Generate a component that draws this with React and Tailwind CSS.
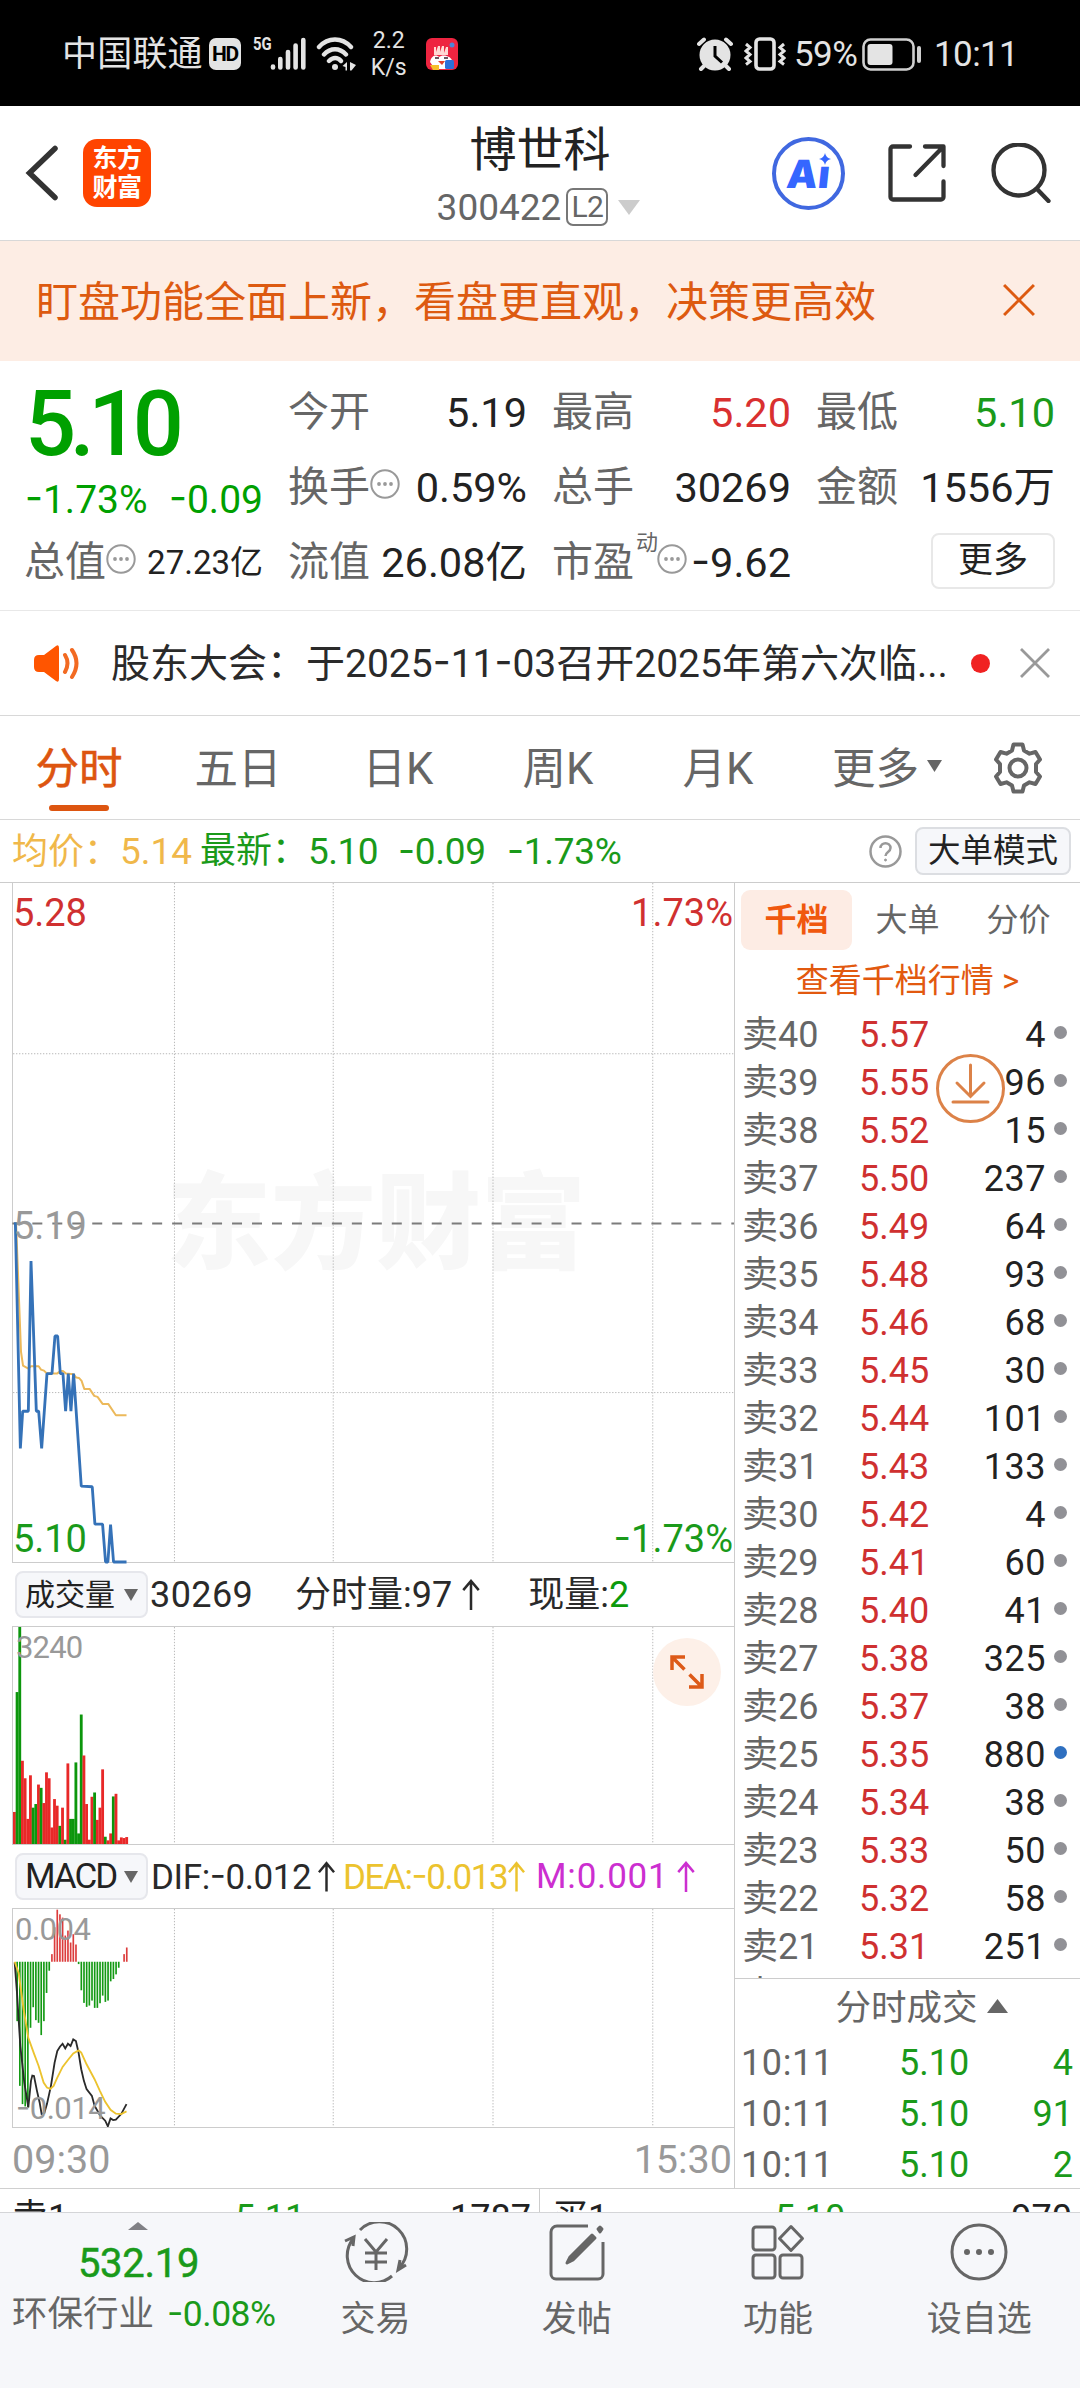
import { Fragment } from 'react';

const quoteColumns = [
    [
        { label: '今开', value: '5.19' },
        { label: '换手', value: '0.59%', info: true },
        { label: '流值', value: '26.08亿' },
    ],
    [
        { label: '最高', value: '5.20', color: 'text-[#d93030]' },
        { label: '总手', value: '30269' },
        { label: '市盈', sup: '动', value: '-9.62', info: true },
    ],
];

const asks = [
    [40, '5.57', 4], [39, '5.55', 96], [38, '5.52', 15], [37, '5.50', 237], [36, '5.49', 64],
    [35, '5.48', 93], [34, '5.46', 68], [33, '5.45', 30], [32, '5.44', 101], [31, '5.43', 133],
    [30, '5.42', 4], [29, '5.41', 60], [28, '5.40', 41], [27, '5.38', 325], [26, '5.37', 38],
    [25, '5.35', 880], [24, '5.34', 38], [23, '5.33', 50], [22, '5.32', 58], [21, '5.31', 251],
];

const trades = [4, 91, 2];

// positive = up minute (red), negative = down minute (green)
const volume = [
    97, -460, -657, 252, 199, 76, 208, -110, -121, 180, -170, 124, 217, 199, 50, 136, 116, -55, 110, -13, 244, -76,
    -76, -247, -32, -392, 268, 121, 13, 143, -156, 73, 110, 226, -22, 11, 32, -144, 152, 11, 20, 18, 21,
];

const macd = [
    0, -179, -374, -429, -436, -439, -199, -137, -176, -184, -221, -179, -94, -27, 23, 104, 157, 143, 133, 79, 94, 58,
    83, 52, -7, -86, -124, -136, -132, -117, -139, -139, -125, -102, -121, -117, -59, -52, -38, -18, 0, 23, 43,
];

// Roboto's hyphen is too short for figures, Inter's has the right length
const Num = ({ children }) =>
    children.split('-').map((part, i) => (
        <Fragment key={i}>
            {i > 0 && <span className="relative -top-[0.04em] font-[Inter]">-</span>}
            {part}
        </Fragment>
    ));

const InfoDots = () => (
    <svg className="mb-2 h-[30px] w-[30px] shrink-0" viewBox="0 0 30 30">
        <circle cx="15" cy="15" r="13.7" fill="none" stroke="#999" strokeWidth="2" />
        <circle cx="9" cy="15" r="1.9" fill="#999" />
        <circle cx="15" cy="15" r="1.9" fill="#999" />
        <circle cx="21" cy="15" r="1.9" fill="#999" />
    </svg>
);

const Cross = ({ className }) => (
    <svg className={className} viewBox="0 0 30 30" stroke="currentColor" strokeWidth="2.8">
        <path d="m1 1 28 28M29 1 1 29" />
    </svg>
);

const UpArrow = ({ className }) => (
    <svg className={className} viewBox="0 0 18 32" fill="none" stroke="currentColor" strokeWidth="2.6">
        <path d="M9 32V2M1 11.5 9 2l8 9.5" />
    </svg>
);

const GridLines = ({ height }) => (
    <g stroke="#b8b8b8" strokeWidth="3" strokeDasharray="4 5">
        {[485, 962, 1442, 1922].map((x) => (
            <line key={x} x1={x} x2={x} y1="0" y2={height} />
        ))}
    </g>
);

const StatusBar = () => (
    <div className="flex h-[106px] items-center bg-black pl-[62px] pr-[62px] pt-[2px] text-[#e4e4e4]">
        <span className="text-[35px] tracking-[0.2px]">中国联通</span>
        <span className="ml-[6px] flex h-[32px] w-[32px] items-center justify-center rounded-[7px] bg-[#e4e4e4] text-[21px] font-bold tracking-[-1.5px] text-black">HD</span>
        <span className="mb-[21px] ml-[12px] w-[17px] origin-left scale-x-[0.78] text-[19px] font-bold">5G</span>
        <svg className="h-[34px] w-[36px]" viewBox="0 0 36 34" stroke="#e4e4e4" strokeWidth="4.6" strokeLinecap="round">
            <path d="M3 30.5v-1M10.3 30.5v-8.5M18 30.5v-15.5M25.6 30.5v-22M33.3 30.5V3" />
        </svg>
        <svg className="ml-[10px] h-[36px] w-[42px]" viewBox="0 0 42 36" fill="none" stroke="#e4e4e4" strokeWidth="4.4" strokeLinecap="round">
            <path d="M3 11c9-10 23-10 32 0M8 18.5c6.5-7 15.5-7 22 0M13 25c4-4 8.5-4 12 0" />
            <circle cx="19" cy="31" r="3" fill="#e4e4e4" stroke="none" />
            <path d="M26.5 30 31 26v8.5h-1.500V31zM34 26l6 3-4.500 5.500H34z" fill="#e4e4e4" stroke="none" />
        </svg>
        <span className="ml-[13px] flex flex-col items-center text-[23px] leading-[27px]">
            <span>2.2</span>
            <span>K/s</span>
        </span>
        <svg className="ml-[19px] h-[32px] w-[32px]" viewBox="0 0 32 32">
            <rect width="32" height="32" rx="6" fill="#ee2440" />
            <path d="M8 17V9h2v5l2-6h2v6l2-6h2v7l2-6h2v8z" fill="#ffd9d4" />
            <path d="M4 24c2-8 7-7 9-5 3-3 12-2 14 5l-5 7H9z" fill="#fff" />
            <path d="M9 20h4M18 20h4" stroke="#3a2430" strokeWidth="1.6" />
            <path d="M12 23h7l-3 4z" fill="#e0412e" />
            <rect x="19" y="22" width="9" height="9" rx="1.5" fill="#2e70d8" />
            <path d="M4 27h9v5H7z" fill="#f6bf2a" />
            <circle cx="26" cy="7" r="2.5" fill="#4c86d8" />
        </svg>
        <div className="ml-auto flex items-center">
            <svg className="h-[34px] w-[36px]" viewBox="0 0 36 34">
                <circle cx="18" cy="18" r="15.5" fill="#e4e4e4" />
                <path d="M2 7 7 2.5M34 7l-5-4.5M7 29l-3 3M29 29l3 3" stroke="#e4e4e4" strokeWidth="4" strokeLinecap="round" />
                <path d="M18 9v10l7 6.5" fill="none" stroke="#000" strokeWidth="3" />
            </svg>
            <svg className="ml-[11px] h-[34px] w-[42px]" viewBox="0 0 42 34" fill="none" stroke="#e4e4e4">
                <rect x="12" y="2" width="18" height="30" rx="3.5" strokeWidth="3.6" />
                <path d="m2 7 4 3.500-4 3.500 4 3.500-4 3.500 4 3.500-4 3M40 7l-4 3.500 4 3.500-4 3.500 4 3.500-4 3.500 4 3" strokeWidth="3" />
            </svg>
            <span className="ml-[8px] w-[64px] text-[35px] tracking-[-0.6px]">59%</span>
            <svg className="ml-[4px] h-[33px] w-[60px]" viewBox="0 0 60 33">
                <rect x="1.5" y="1.5" width="50" height="30" rx="7" fill="none" stroke="#cfcfcf" strokeWidth="2.6" />
                <rect x="5.5" y="6" width="25" height="21" rx="3" fill="#e4e4e4" />
                <rect x="55" y="8" width="4" height="17" rx="2" fill="#cfcfcf" />
            </svg>
            <span className="ml-[12px] w-[84px] text-[35px] tracking-[-0.6px]">10:11</span>
        </div>
    </div>
);

const Header = () => (
    <header className="grid h-[135px] grid-cols-[1fr_auto_1fr] items-center border-b border-[#d8d8d8]">
        <div className="flex items-center pl-[25px]">
            <svg className="h-[56px] w-[34px]" viewBox="0 0 34 56" fill="none" stroke="#333" strokeWidth="5.5" strokeLinecap="round">
                <path d="M30 3.500 4.500 28 30 52.500" />
            </svg>
            <div className="ml-[24px] flex h-[68px] w-[68px] flex-col items-center justify-center rounded-[14px] bg-[#ff4400] text-[25px] font-bold leading-[29px] tracking-[-0.5px] text-white">
                <span>东方</span>
                <span>财富</span>
            </div>
        </div>
        <div className="flex flex-col items-center pt-[6px]">
            <h1 className="h-[47px] text-[47px] text-[#222]">博世科</h1>
            <div className="-ml-[3px] mt-[15px] flex h-[38px] items-center text-[37px] text-[#666]">
                <span>300422</span>
                <span className="ml-[5px] flex h-[38px] w-[42px] items-center justify-center rounded-[7px] border-2 border-[#777] text-[30px] tracking-[-0.5px]">L2</span>
                <svg className="ml-[10px] h-[15px] w-[22px]" viewBox="0 0 22 15"><path d="M0 0h22L11 15z" fill="#ccc" /></svg>
            </div>
        </div>
        <div className="flex items-center justify-end pr-[29px]">
            <div className="relative flex h-[73px] w-[73px] items-center justify-center rounded-full border-[4px] border-[#4068e0]">
                <span className="-skew-x-6 font-[Inter] text-[39px] font-black tracking-[0.5px] text-[#3566ff]">Aı</span>
                <svg className="absolute right-[10px] top-[12px] h-[12px] w-[12px]" viewBox="0 0 12 12"><path d="M6 0q1 5 6 6-5 1-6 6-1-5-6-6 5-1 6-6z" fill="#3566ff" /></svg>
            </div>
            <svg className="ml-[43px] h-[58px] w-[58px]" viewBox="0 0 58 58" fill="none" stroke="#333" strokeWidth="4.3" strokeLinecap="round" strokeLinejoin="round">
                <path d="M22 2.500H5A2.500 2.500 0 0 0 2.500 5v48A2.500 2.500 0 0 0 5 55.500h48a2.500 2.500 0 0 0 2.500-2.500V37.500M37 2.500h18.500V22M54 4 27.500 31" />
            </svg>
            <svg className="ml-[45px] h-[60px] w-[60px]" viewBox="0 0 60 60" fill="none" stroke="#333" strokeWidth="4.3" strokeLinecap="round">
                <circle cx="28" cy="27" r="25.5" />
                <path d="m46 46 11.500 12" />
            </svg>
        </div>
    </header>
);

const QuoteRow = ({ label, sup, value, info, color = 'text-[#222]' }) => (
    <div className="flex h-[75px] items-center justify-between">
        <div className="-ml-[1px] flex items-center text-[#666]">
            <span className="text-[41px]">{label}</span>
            {sup && <span className="-mr-[1px] ml-[2px] mb-[40px] text-[22px]">{sup}</span>}
            {info && <InfoDots />}
        </div>
        <span className={`text-[41.500px] ${color}`}><Num>{value}</Num></span>
    </div>
);

const QuotePanel = () => (
    <section className="grid h-[250px] grid-cols-4 gap-x-[26px] border-b border-[#e8e8e8] px-[25px] pt-[14px] text-[#222]">
        <div className="flex flex-col">
            <div className="flex h-[100px] items-center text-[90px] font-medium tracking-[-6.5px] text-[#00a000]">5.10</div>
            <div className="flex h-[48px] items-center justify-between text-[39px] text-[#00a000]">
                <span><Num>-1.73%</Num></span>
                <span><Num>-0.09</Num></span>
            </div>
            <div className="flex h-[79px] items-center">
                <span className="-ml-[1px] text-[41px] text-[#666]">总值</span>
                <InfoDots />
                <span className="ml-auto text-[33px]">27.23亿</span>
            </div>
        </div>
        {quoteColumns.map((rows, i) => (
            <div key={i}>
                {rows.map((row) => (
                    <QuoteRow key={row.label} {...row} />
                ))}
            </div>
        ))}
        <div>
            <QuoteRow label="最低" value="5.10" color="text-[#1a9a1a]" />
            <QuoteRow label="金额" value="1556万" />
            <div className="flex h-[71px] items-center justify-end">
                <button className="h-[56px] w-[124px] rounded-[8px] border-2 border-[#e8e8e8] text-[35px]">更多</button>
            </div>
        </div>
    </section>
);

const Notice = () => (
    <section className="flex h-[105px] items-center border-b border-[#d8d8d8] pl-[34px] pr-[30px]">
        <svg className="h-[37px] w-[46px]" viewBox="0 0 46 37">
            <path d="M0 15q0-5 5-5h5L22 1q3-2 3 2v31q0 4-3 2L10 27H5q-5 0-5-5z" fill="#ff5500" />
            <path d="M31 10q5 8 0 17M38 5q9 13 0 27" fill="none" stroke="#f26a22" strokeWidth="4" strokeLinecap="round" />
        </svg>
        <span className="ml-[31px] whitespace-nowrap text-[39px] text-[#2a2a2a]"><Num>股东大会：于2025-11-03召开2025年第六次临...</Num></span>
        <span className="ml-auto h-[19px] w-[19px] rounded-full bg-[#f02222]" />
        <Cross className="ml-[30px] h-[30px] w-[30px] text-[#999]" />
    </section>
);

const PeriodTabs = () => (
    <nav className="flex h-[104px] items-center border-b border-[#d8d8d8] text-[43.500px] text-[#666]">
        <div className="relative flex h-full w-[158px] items-center justify-center pt-[5px] text-[#dd5510] [-webkit-text-stroke:0.6px]">
            分时
            <span className="absolute bottom-[8px] left-[49px] h-[6px] w-[60px] rounded-full bg-[#dd5510]" />
        </div>
        {['五日', '日K', '周K', '月K'].map((tab) => (
            <div key={tab} className="w-[160px] pt-[5px] text-center">{tab}</div>
        ))}
        <div className="flex w-[178px] items-center justify-center pt-[5px]">
            更多
            <svg className="mb-[8px] ml-[8px] h-[12px] w-[15px]" viewBox="0 0 15 12"><path d="M0 0h15L7.500 12z" fill="#666" /></svg>
        </div>
        <svg className="ml-[16px] h-[52px] w-[52px]" viewBox="0 0 52 52" fill="none" stroke="#666" strokeWidth="4">
            <path d="M21.500 2.500h9l1.500 6 5.500 3.200 6-1.700L48 17.500 44 22v8l4 4.500-4.500 7.500-6-1.700L32 43.500l-1.500 6h-9l-1.500-6-5.500-3.200-6 1.700L4 34.500 8 30v-8l-4-4.500L8.500 10l6 1.700L20 8.500z" strokeLinejoin="round" />
            <circle cx="26" cy="26" r="8.5" />
        </svg>
    </nav>
);

const PriceBar = () => (
    <div className="flex h-[63px] items-center border-b border-[#ccc] pl-[12px] pr-[9px] text-[37px] text-[#1a9a1a]">
        <span className="w-[188px] whitespace-nowrap text-[#f0b84a]">
            <span className="inline-block w-[108px] text-[36px]">均价：</span>5.14
        </span>
        <span className="inline-block w-[108px] text-[36px]">最新：</span>
        <span className="w-[90px] tracking-[-0.5px]">5.10</span>
        <span className="w-[109px] tracking-[-0.3px]"><Num>-0.09</Num></span>
        <span className="tracking-[-0.3px]"><Num>-1.73%</Num></span>
        <svg className="ml-auto h-[33px] w-[33px]" viewBox="0 0 33 33" fill="none" stroke="#999" strokeWidth="2.5">
            <circle cx="16.500" cy="16.500" r="15" />
            <path d="M11.500 13c0-6.500 10-6.500 10 0 0 4-5 4-5 8" />
            <circle cx="16.500" cy="25" r="1" fill="#999" strokeWidth="1" />
        </svg>
        <button className="ml-[13px] h-[48px] w-[156px] rounded-[8px] border-2 border-[#dcdee2] bg-[#f6f7fa] text-[32.500px] text-[#222]">大单模式</button>
    </div>
);

const PriceChart = () => (
    <div className="relative h-[680px] border-b border-l border-[#ccc]">
        <div className="absolute left-[153px] top-[289px] whitespace-nowrap text-[105px] font-black text-[#f7f7f7]">东方财富</div>
        <svg className="absolute inset-0 h-full w-full overflow-visible" viewBox="0 0 2166 2040" fill="none">
            <GridLines height={2040} />
            <path d="M0 513H2166M0 1531H2166" stroke="#b8b8b8" strokeWidth="3" strokeDasharray="4 5" />
            <path d="M-2 1023H2166" stroke="#7c7c7c" strokeWidth="6" strokeDasharray="30 30" />
            <g transform="translate(-38 894)" strokeLinejoin="round">
                <polyline
                    points="47,125 62,515 68,556 84,565 92,558 115,558 122,568 131,571 140,580 170,580 180,572 188,572 197,580 220,582 228,592 236,593 244,602 252,626 268,626 282,647 292,650 307,671 324,671 347,705 379,705"
                    stroke="#ecb95a"
                    strokeWidth="6"
                />
                <polyline
                    points="45,125 60,805 67,693 84,693 92,242 108,693 115,693 124,805 140,580 155,580 164,467 172,467 180,580 188,580 196,693 204,580 212,693 220,580 243,918 276,920 284,1032 307,1032 316,1146 323,1146 331,1034 340,1146 379,1146"
                    stroke="#3572b8"
                    strokeWidth="8.5"
                    strokeLinejoin="bevel"
                />
            </g>
        </svg>
        <div className="absolute left-0 top-[11px] text-[38px] tracking-[-0.1px] text-[#d03030]">5.28</div>
        <div className="absolute right-[1px] top-[11px] text-[38px] text-[#d03030]">1.73%</div>
        <div className="absolute left-0 top-[324px] text-[38px] tracking-[-0.1px] text-[#999]">5.19</div>
        <div className="absolute bottom-[4px] left-0 text-[38px] tracking-[-0.1px] text-[#1a9a1a]">5.10</div>
        <div className="absolute bottom-[4px] right-[1px] text-[38px] text-[#1a9a1a]"><Num>-1.73%</Num></div>
    </div>
);

const IndicatorButton = ({ children }) => (
    <button className="ml-[3px] flex h-[47px] w-[133px] shrink-0 items-center justify-between rounded-[8px] border-2 border-[#e6e7ec] bg-[#f6f7fa] pl-[8px] pr-[8px] text-[#222]">
        {children}
        <svg className="h-[12px] w-[14px]" viewBox="0 0 14 12"><path d="M0 0h14L7 12z" fill="#666" /></svg>
    </button>
);

const VolumeChart = () => (
    <div className="relative h-[219px] border-b border-l border-t border-[#ccc]">
        <svg className="absolute inset-0 h-full w-full" viewBox="0 0 2166 657" preserveAspectRatio="none">
            <GridLines height={657} />
            {volume.map((v, i) => (
                <rect key={i} x={i * 8.03} y={657 - Math.abs(v)} width="8.5" height={Math.abs(v)} fill={v > 0 ? '#e82828' : '#0c960c'} />
            ))}
        </svg>
        <div className="absolute left-[3px] top-[5px] text-[31px] tracking-[-0.8px] text-[#999]">3240</div>
        <div className="absolute right-[13px] top-[11px] flex h-[68px] w-[68px] items-center justify-center rounded-full bg-[#fdf0e8]">
            <svg className="h-[34px] w-[34px]" viewBox="0 0 34 34" fill="none" stroke="#dd5a18" strokeWidth="3.5">
                <path d="M15 2H2v13M2 2l12.500 12.500M19 32h13V19M32 32 19.500 19.500" />
            </svg>
        </div>
    </div>
);

const MacdChart = () => (
    <div className="relative h-[220px] border-b border-l border-t border-[#ccc]">
        <svg className="absolute inset-0 h-full w-full" viewBox="38 877 2166 657" preserveAspectRatio="none" fill="none">
            <g transform="translate(38 877)"><GridLines height={657} /></g>
            {macd.map((v, i) => (
                <rect key={i} x={40 + i * 8.03} y={v > 0 ? 1036 - v : 1036} width="5" height={Math.abs(v)} fill={v > 0 ? '#dc3c3c' : '#149a14'} />
            ))}
            <polyline
                points="43,1038 50,1130 60,1290 72,1400 84,1475 92,1395 96,1379 101,1380 110,1425 118,1460 124,1495 132,1492 140,1465 152,1410 163,1340 171,1305 179,1292 187,1283 195,1297 203,1283 211,1290 219,1270 227,1275 235,1310 243,1360 251,1395 259,1420 275,1440 283,1470 300,1500 315,1515 323,1532 331,1508 339,1513 347,1512 363,1495 379,1465"
                stroke="#2a2a2a"
                strokeWidth="5.5"
            />
            <polyline
                points="43,1036 55,1070 70,1180 84,1265 100,1310 115,1350 130,1400 140,1415 150,1419 160,1410 171,1385 187,1353 203,1332 219,1312 235,1303 243,1310 259,1345 283,1390 299,1425 315,1458 331,1482 347,1494 363,1495 379,1487"
                stroke="#ecc32e"
                strokeWidth="5.5"
            />
        </svg>
        <div className="absolute left-[2px] top-[5px] text-[31px] tracking-[-0.5px] text-[#999]">0.004</div>
        <div className="absolute bottom-[3px] left-[3px] text-[31px] tracking-[-0.5px] text-[#999]"><Num>-0.014</Num></div>
    </div>
);

const ChartColumn = () => (
    <div className="w-[735px] border-r border-[#ccc] pl-[12px]">
        <PriceChart />
        <div className="flex h-[63px] items-center text-[36px] text-[#2a2a2a]">
            <IndicatorButton><span className="text-[30px]">成交量</span></IndicatorButton>
            <span className="ml-[2px] w-[145px] tracking-[0.4px]">30269</span>
            <span>分时量:97</span>
            <UpArrow className="ml-[10px] h-[31px] w-[18px]" />
            <span className="ml-[48px]">现量:<span className="text-[#0c9a0c]">2</span></span>
        </div>
        <VolumeChart />
        <div className="flex h-[63px] items-center text-[35px] text-[#2a2a2a]">
            <IndicatorButton><span className="text-[35px] tracking-[-2px]">MACD</span></IndicatorButton>
            <span className="ml-[3px] w-[167px] tracking-[-0.4px]"><Num>DIF:-0.012</Num></span>
            <UpArrow className="h-[31px] w-[17px]" />
            <span className="ml-[8px] w-[165px] whitespace-nowrap tracking-[-1.4px] text-[#ecc32e]"><Num>DEA:-0.013</Num></span>
            <UpArrow className="h-[31px] w-[17px] text-[#ecc32e]" />
            <span className="ml-[11px] w-[141px] tracking-[0.8px] text-[#cc2fd0]">M:0.001</span>
            <UpArrow className="h-[31px] w-[18px] text-[#cc2fd0]" />
        </div>
        <MacdChart />
        <div className="flex h-[61px] items-center justify-between pt-[3px] pr-[2px] text-[39.500px] text-[#999]">
            <span>09:30</span>
            <span>15:30</span>
        </div>
    </div>
);

const OrderBook = () => (
    <div className="relative flex-1">
        <div className="flex h-[73px] items-center pl-[6px] text-[32px] text-[#666]">
            <span className="flex h-[60px] w-[111px] items-center justify-center rounded-[9px] bg-[#fdece4] font-bold text-[#f0580e]">千档</span>
            <span className="w-[111px] text-center">大单</span>
            <span className="w-[111px] text-center">分价</span>
        </div>
        <div className="flex h-[48px] items-center justify-center pt-[1px] text-[33px] text-[#e2590f]">查看千档行情&nbsp;&gt;</div>
        <div className="h-[975px] overflow-hidden border-b border-[#ccc] pt-[7px] text-[36px]">
            {asks.map(([level, price, qty]) => (
                <div key={level} className="flex h-[48px] items-center pl-[7px] pr-[13px]">
                    <span className="w-[117px] text-[#666]">卖{level}</span>
                    <span className="w-[80px] text-[#cf3030]">{price}</span>
                    <span className="ml-auto tracking-[0.5px] text-[#222]">{qty}</span>
                    <span className={`mb-[6px] ml-[8px] h-[13px] w-[13px] rounded-full ${level === 25 ? 'bg-[#2f70c0]' : 'bg-[#919196]'}`} />
                </div>
            ))}
            <div className="flex h-[48px] items-center pl-[7px] text-[#666]">卖20</div>
        </div>
        <svg className="absolute left-[201px] top-[171px] h-[69px] w-[69px]" viewBox="0 0 69 69" fill="none" stroke="#dc8248" strokeWidth="3">
            <circle cx="34.5" cy="34.5" r="33" />
            <path d="M34.500 11v31M21 29l13.500 13.500L48 29M17 48h35" strokeLinecap="round" />
        </svg>
        <div className="flex h-[58px] items-center justify-center pl-[28px] pt-[2px] text-[35.500px] text-[#666]">
            分时成交
            <svg className="mb-[7px] ml-[9px] h-[14px] w-[21px]" viewBox="0 0 21 14"><path d="M0 14h21L10.500 0z" fill="#666" /></svg>
        </div>
        {trades.map((qty) => (
            <div key={qty} className="flex h-[51px] items-center justify-between pl-[6px] pr-[7px] text-[36px] text-[#1a9a1a]">
                <span className="w-[158px] tracking-[0.6px] text-[#666]">10:11</span>
                <span>5.10</span>
                <span className="flex-1 text-right">{qty}</span>
            </div>
        ))}
    </div>
);

const TopOfBook = ({ side, price, qty }) => (
    <div className="flex w-[540px] items-center pl-[12px] pr-[8px] text-[36px] text-[#222]">
        <span className="w-[223px]">{side}</span>
        <span className="text-[#1a9a1a]">{price}</span>
        <span className="ml-auto">{qty}</span>
    </div>
);

const NavItem = ({ label, children }) => (
    <div className="flex flex-1 flex-col items-center pt-[9px]">
        <svg className="h-[60px] w-[66px]" viewBox="0 0 66 60" fill="none" stroke="#666" strokeWidth="3">{children}</svg>
        <span className="mt-[20px] text-[35px] text-[#666]">{label}</span>
    </div>
);

const BottomBar = () => (
    <footer className="flex h-[176px] border-t border-[#d4d5d8] bg-[#f6f7fa]">
        <div className="flex w-[275px] flex-col pt-[9px]">
            <svg className="ml-[128px] h-[8px] w-[20px]" viewBox="0 0 20 8"><path d="M0 8h20L10 0z" fill="#808085" /></svg>
            <span className="mt-[14px] w-[277px] text-center text-[40px] tracking-[-0.3px] text-[#1a9a1a] [-webkit-text-stroke:0.5px]">532.19</span>
            <div className="mt-[12px] flex items-center whitespace-nowrap pl-[12px] text-[35.500px] text-[#666]">
                环保行业
                <span className="ml-[13px] tracking-[-0.500px] text-[#1a9a1a]"><Num>-0.08%</Num></span>
            </div>
        </div>
        <NavItem label="交易">
            <path d="M17 8A27 27 0 0 1 56 46M49 54A27 27 0 0 1 10 17M2 19l9-4-1 9M63 43l-8 5 2-10" />
            <path d="m22 17 11 13 11-13M33 30v18M22 31h22M22 40h22" />
        </NavItem>
        <NavItem label="发帖">
            <path d="M44 4H13a6 6 0 0 0-6 6v42a5 5 0 0 0 5 5h42a5 5 0 0 0 5-5V20" />
            <path d="m48 13-22 22-3 6 6-3 22-22zM54 7l2-2 2 2-2 3z" fill="#666" strokeLinejoin="round" />
        </NavItem>
        <NavItem label="功能">
            <rect x="8" y="5" width="22" height="23" rx="3" />
            <rect x="8" y="33" width="22" height="23" rx="3" />
            <rect x="35" y="33" width="22" height="23" rx="3" />
            <path d="M46 4.500 57.500 16.500 46 28.500 34.500 16.500z" strokeLinejoin="round" />
        </NavItem>
        <NavItem label="设自选">
            <circle cx="33" cy="30" r="27" />
            <g fill="#666" stroke="none">
                <circle cx="21" cy="30" r="3" />
                <circle cx="33" cy="30" r="3" />
                <circle cx="45" cy="30" r="3" />
            </g>
        </NavItem>
    </footer>
);

export default function App() {
    return (
        <div className="flex h-[2388px] w-[1080px] flex-col overflow-hidden bg-white font-[Roboto,'Noto_Sans_CJK_SC',sans-serif] leading-none [&_button]:leading-none">
            <StatusBar />
            <Header />
            <div className="flex h-[120px] items-center justify-between bg-[#fdede4] pl-[36px] pr-[45px] pt-[4px] text-[42px] text-[#dd5a10]">
                <span>盯盘功能全面上新，看盘更直观，决策更高效</span>
                <Cross className="mb-[6px] h-[32px] w-[32px]" />
            </div>
            <QuotePanel />
            <Notice />
            <PeriodTabs />
            <PriceBar />
            <div className="flex h-[1306px] border-b border-[#d0d0d0]">
                <ChartColumn />
                <OrderBook />
            </div>
            <div className="h-[23px] overflow-hidden">
                <div className="flex h-[58px] divide-x divide-[#ccc]">
                    <TopOfBook side="卖1" price="5.11" qty="1787" />
                    <TopOfBook side="买1" price="5.10" qty="970" />
                </div>
            </div>
            <BottomBar />
        </div>
    );
}
